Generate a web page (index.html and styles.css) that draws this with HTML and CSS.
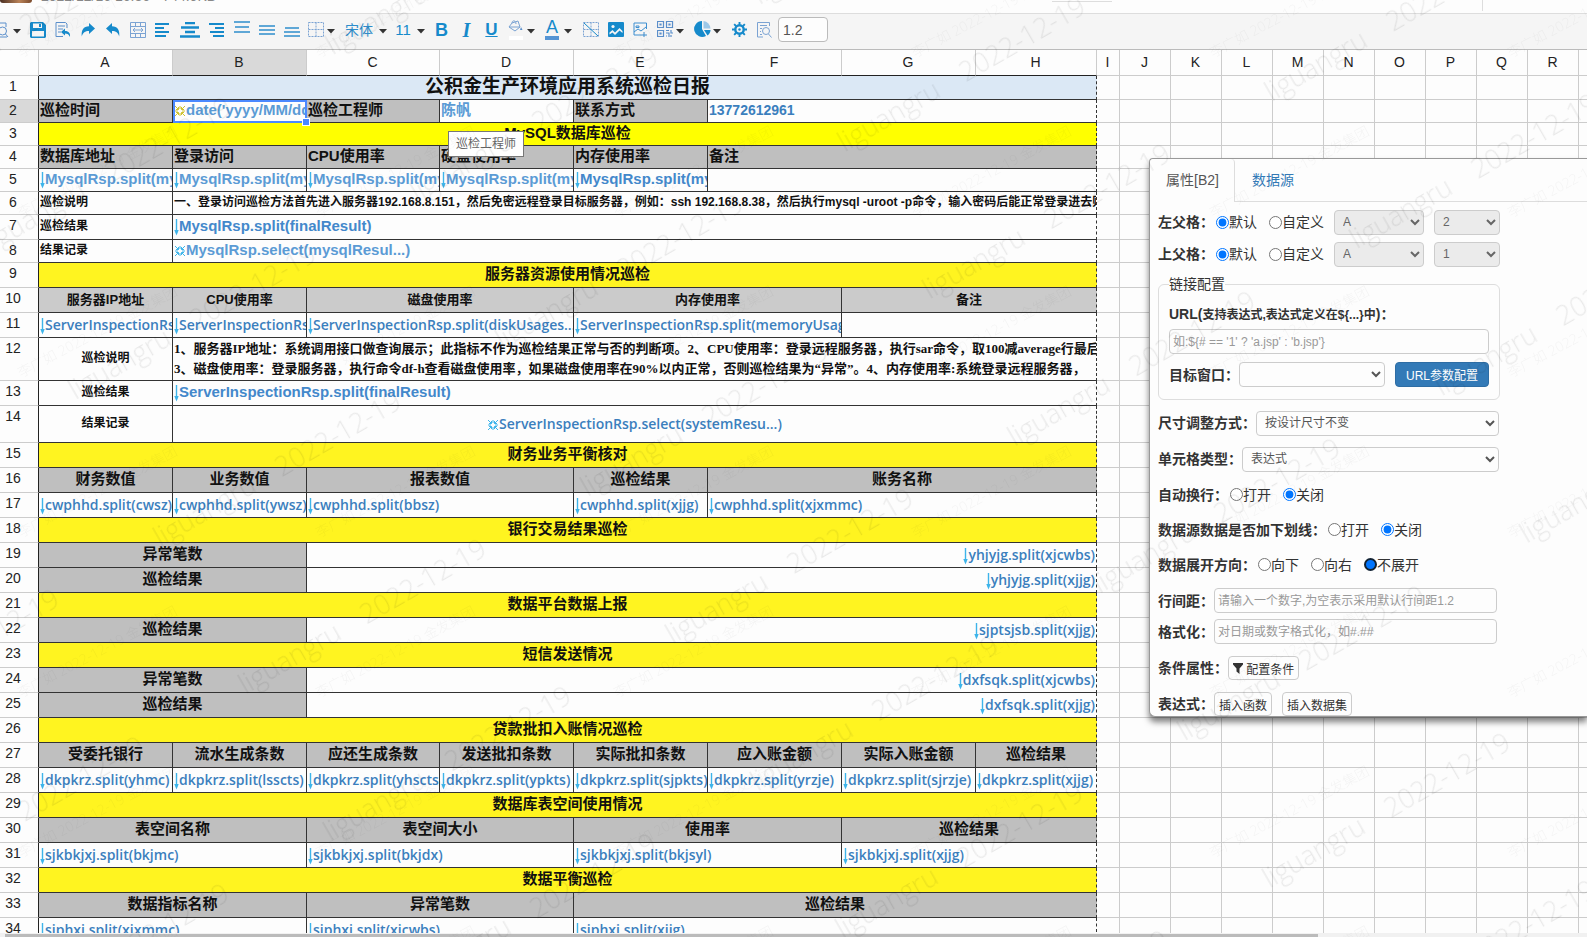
FILE: index.html
```html
<!DOCTYPE html>
<html lang="zh-CN">
<head>
<meta charset="utf-8">
<title>报表设计器</title>
<link rel="stylesheet" href="styles.css">
</head>
<body>
<svg class="defs" width="0" height="0" aria-hidden="true">
  <symbol id="down" viewBox="0 0 5 18"><path d="M2.5 1V15" stroke="#3db4ea" stroke-width="1.4" fill="none"/><path d="M0.3 12L2.5 17.500L4.700 12z" fill="#3db4ea"/></symbol>
  <symbol id="burst" viewBox="0 0 10 10"><path d="M0 0L3.500 3.500M10 0L6.500 3.500M0 10L3.500 6.500M10 10L6.500 6.500M5 0V3M5 7V10M0 5H3M7 5H10M3.500 1V3.500H1M6.500 1V3.500H9M3.500 9V6.500H1M6.500 9V6.500H9" stroke="currentColor" fill="none"/></symbol>
  <symbol id="caret" viewBox="0 0 8 5"><path d="M0 0H8L4 4.500z" fill="#333"/></symbol>
</svg>

<header class="titlebar">
  <span class="avatar"></span>
  <span class="file-meta">2022/12/16 16:36 · 744.9KB</span>
  <span class="title-chip"></span>
  <span class="title-sep"></span>
</header>

<div class="toolbar">
  <button class="tool first" aria-label="预览"><svg width="9" height="18" viewBox="0 0 9 18"><g fill="none" stroke="#5b8fcb"><path d="M0 2H6V6M0 16H7" /><circle cx="2.500" cy="10" r="4"/><path d="M5.500 13L8 16"/></g></svg><svg class="caret" width="8" height="5"><use href="#caret"/></svg></button>
  <button class="tool" aria-label="保存"><svg width="16" height="16" viewBox="0 0 16 16"><path fill="#168acb" fill-rule="evenodd" d="M1 0H13L16 3V15L15 16H1L0 15V1zM3 1.500V6H12V1.500zM2 9V14.500H14V9zM9 2H11V5H9z"/></svg></button>
  <button class="tool" aria-label="另存为"><svg width="16" height="16" viewBox="0 0 16 16"><path d="M12 6V2L10.500 .5H1V14.500H8M3 4H10M3 7H8M3 10H6" fill="none" stroke="#5b8fcb"/><path d="M6 10L10 6.500V9C14 9 15.500 11.500 15 15C14 12.500 12.500 11.500 10 11.500V13.500z" fill="#168acb"/></svg></button>
  <button class="tool" aria-label="重做"><svg width="14" height="14" viewBox="0 0 14 14"><path fill="#168acb" d="M14 5.500L8 0V3.200C2.500 3.200 0 7 .8 13.500C2 9.500 4 8 8 8V11z"/></svg></button>
  <button class="tool" aria-label="撤销"><svg width="14" height="14" viewBox="0 0 14 14"><path fill="#168acb" d="M0 5.500L6 0V3.200C11.500 3.200 14 7 13.200 13.500C12 9.500 10 8 6 8V11z"/></svg></button>
  <button class="tool" aria-label="合并单元格"><svg width="16" height="16" viewBox="0 0 16 16"><path d="M.5 .5H15.500V15.500H.5zM.5 4.500H15.500M.5 11.500H15.500M5.500 .5V4.500M10.500 .5V4.500M5.500 11.500V15.500M10.500 11.500V15.500M3 8H13M5 6L3 8L5 10M11 6L13 8L11 10" fill="none" stroke="#7ba3d3"/></svg></button>
  <button class="tool" aria-label="左对齐"><svg width="15" height="14" viewBox="0 0 15 14"><path d="M0 1H14M0 5H9M0 9H14M0 13H11" stroke="#168acb" stroke-width="2"/></svg></button>
  <button class="tool wide" aria-label="水平居中"><svg width="20" height="16" viewBox="0 0 20 16"><path d="M5 1H15M1 5.500H19M5 10H15M0 14.500H20" stroke="#168acb" stroke-width="2.400"/></svg></button>
  <button class="tool" aria-label="右对齐"><svg width="15" height="14" viewBox="0 0 15 14"><path d="M0 1H15M6 5H15M1 9H15M4 13H15" stroke="#168acb" stroke-width="2"/></svg></button>
  <button class="tool up" aria-label="顶端对齐"><svg width="16" height="12" viewBox="0 0 16 12"><path d="M0 1H16M1 6H15M0 11H16" stroke="#2e8dcc" stroke-width="1.500"/></svg></button>
  <button class="tool" aria-label="垂直居中"><svg width="16" height="10" viewBox="0 0 16 10"><path d="M0 1H16M0 5H16M0 9H16" stroke="#2e8dcc" stroke-width="1.600"/></svg></button>
  <button class="tool low" aria-label="底端对齐"><svg width="16" height="10" viewBox="0 0 16 10"><path d="M1 1H15M0 5H16M0 9H16" stroke="#2e8dcc" stroke-width="1.500"/></svg></button>
  <button class="tool drop" aria-label="边框"><svg width="16" height="15" viewBox="0 0 16 15"><path d="M.5 .5H15.500V14.500H.5zM8 .5V14.500M.5 7.500H15.500" fill="none" stroke="#7ba3d3" stroke-dasharray="2 1"/></svg><svg class="caret" width="8" height="5"><use href="#caret"/></svg></button>
  <button class="tool font-name">宋体<svg class="caret" width="8" height="5"><use href="#caret"/></svg></button>
  <button class="tool font-size">11<svg class="caret" width="8" height="5"><use href="#caret"/></svg></button>
  <button class="tool bold">B</button>
  <button class="tool italic">I</button>
  <button class="tool underline">U</button>
  <button class="tool drop" aria-label="背景色"><svg width="16" height="20" viewBox="0 0 16 20"><path d="M4 3L10 1L12 7L7 11L1 7z M1 7H12M4 3C4 0 8 0 8 4" fill="none" stroke="#7ba3d3"/><path d="M13 7L14.500 10H12z" fill="#5b8fcb"/><path d="M1 18H15" stroke="#fff" stroke-width="4"/></svg><svg class="caret" width="8" height="5"><use href="#caret"/></svg></button>
  <button class="tool drop" aria-label="字体颜色"><span class="fore">A</span><svg class="caret" width="8" height="5"><use href="#caret"/></svg></button>
  <button class="tool" aria-label="斜表头"><svg width="16" height="15" viewBox="0 0 16 15"><path d="M.5 .5H15.500V14.500H.5zM8 .5V14.500M.5 7.500H15.500" fill="none" stroke="#7ba3d3" stroke-dasharray="2 1"/><path d="M1 1L15 14" stroke="#168acb"/></svg></button>
  <button class="tool" aria-label="图片"><svg width="16" height="15" viewBox="0 0 16 15"><rect width="16" height="15" rx="1" fill="#168acb"/><circle cx="5" cy="4.500" r="1.600" fill="#f5f5f5"/><path fill="#f5f5f5" d="M1.500 10.500L4.500 8L7 10.500L11.500 6L14.500 9V11L11.500 8.500L7 13L4.500 10.500L1.500 12.500z"/></svg></button>
  <button class="tool" aria-label="图片表达式"><svg width="15" height="15" viewBox="0 0 15 15"><path d="M13.500 7V1H1V13H8M1 10L5 7L8 9L13 5M3 4H6V5.500H3zM8 13H14M11 10V15" fill="none" stroke="#3e8fd0"/></svg></button>
  <button class="tool drop" aria-label="二维码"><svg width="17" height="17" viewBox="0 0 17 17"><path d="M.5 .5H6.500V6.500H.5zM9.500 .5H15.500V6.500H9.500zM.5 9.500H6.500V15.500H.5zM3 3H4V4H3zM12 3H13V4H12zM3 12H4V13H3zM9 9.500H12M14 9V12H16M9 12H12V16M9 15H10M14 14V16" fill="none" stroke="#5b8fcb" stroke-width="1.200"/></svg><svg class="caret" width="8" height="5"><use href="#caret"/></svg></button>
  <button class="tool drop" aria-label="图表"><svg width="17" height="17" viewBox="0 0 17 17"><path fill="#168acb" d="M8 0A8 8 0 1 0 12 15L8 8z"/><path fill="#9cc8e8" d="M9.500 0A8 8 0 0 1 16.500 7.500H9.500z"/><path fill="#168acb" d="M10 9H16.500C16.500 11.500 15 13.500 13.500 14.500z"/></svg><svg class="caret" width="8" height="5"><use href="#caret"/></svg></button>
  <button class="tool" aria-label="设置"><svg width="15" height="15" viewBox="0 0 16 16"><circle cx="8" cy="8" r="4.500" fill="none" stroke="#168acb" stroke-width="2.600"/><circle cx="8" cy="8" r="1.300" fill="#168acb"/><path d="M8 0V3M8 13V16M0 8H3M13 8H16M2.300 2.300L4.500 4.500M11.500 11.500L13.700 13.700M2.300 13.700L4.500 11.500M11.500 4.500L13.700 2.300" stroke="#168acb" stroke-width="2"/></svg></button>
  <button class="tool" aria-label="查看"><svg width="15" height="16" viewBox="0 0 15 16"><g fill="none" stroke="#7ba3d3"><path d="M12.500 4V.5H.5V15H6M3 3.500H10M3 6.500H5M3 9.500H4M3 12.500H5"/><circle cx="9" cy="9" r="3.500"/><path d="M11.500 12L14.500 15.500"/></g></svg></button>
  <input class="line-height" value="1.2" aria-label="行高">
</div>

<main class="workspace">
<div class="sheet">
<table class="grid">
<colgroup><col class="c-num"><col class="c-a"><col class="c-a"><col class="c-c"><col class="c-a"><col class="c-a"><col class="c-a"><col class="c-a"><col class="c-h"><col class="c-i"><col class="c-j"><col class="c-j"><col class="c-j"><col class="c-j"><col class="c-j"><col class="c-j"><col class="c-j"><col class="c-j"><col class="c-j"><col class="c-j"></colgroup>
<thead><tr><th class="corner"></th><th>A</th><th class="on">B</th><th>C</th><th>D</th><th>E</th><th>F</th><th>G</th><th>H</th><th>I</th><th>J</th><th>K</th><th>L</th><th>M</th><th>N</th><th>O</th><th>P</th><th>Q</th><th>R</th><th></th></tr></thead>
<tbody>
<tr class="h24"><th>1</th><td class="title" colspan="8">公积金生产环境应用系统巡检日报</td><td class="free"></td><td class="empty" colspan="10"></td></tr>
<tr class="h23"><th class="on">2</th><td class="head">巡检时间</td><td class="exp arial soft selected"><div class="clip"><svg class="burst olive" width="10" height="10"><use href="#burst"/></svg>date('yyyy/MM/dd')</div><i class="handle"></i></td><td class="head">巡检工程师</td><td class="exp arial soft">陈帆</td><td class="head">联系方式</td><td class="exp phone" colspan="3">13772612961</td><td class="free"></td><td class="empty" colspan="10"></td></tr>
<tr class="h23"><th>3</th><td class="band pure" colspan="8">MySQL数据库巡检</td><td class="free"></td><td class="empty" colspan="10"></td></tr>
<tr class="h23"><th>4</th><td class="head">数据库地址</td><td class="head">登录访问</td><td class="head">CPU使用率</td><td class="head">硬盘使用率</td><td class="head">内存使用率</td><td class="head" colspan="3">备注</td><td class="free"></td><td class="empty" colspan="10"></td></tr>
<tr class="h23"><th>5</th><td class="exp arial soft"><svg class="down" width="5" height="18"><use href="#down"/></svg>MysqlRsp.split(my</td><td class="exp arial soft"><svg class="down" width="5" height="18"><use href="#down"/></svg>MysqlRsp.split(my</td><td class="exp arial soft"><svg class="down" width="5" height="18"><use href="#down"/></svg>MysqlRsp.split(my</td><td class="exp arial soft"><svg class="down" width="5" height="18"><use href="#down"/></svg>MysqlRsp.split(my</td><td class="exp arial"><svg class="down" width="5" height="18"><use href="#down"/></svg>MysqlRsp.split(my</td><td colspan="3"></td><td class="free"></td><td class="empty" colspan="10"></td></tr>
<tr class="h23"><th>6</th><td class="note">巡检说明</td><td class="note" colspan="7">一、登录访问巡检方法首先进入服务器192.168.8.151，然后免密远程登录目标服务器，例如：ssh 192.168.8.38，然后执行mysql -uroot -p命令，输入密码后能正常登录进去则</td><td class="free"></td><td class="empty" colspan="10"></td></tr>
<tr class="h25"><th>7</th><td class="note">巡检结果</td><td class="exp arial" colspan="7"><svg class="down" width="5" height="18"><use href="#down"/></svg>MysqlRsp.split(finalResult)</td><td class="free"></td><td class="empty" colspan="10"></td></tr>
<tr class="h23"><th>8</th><td class="note">结果记录</td><td class="exp arial soft" colspan="7"><svg class="burst" width="10" height="10"><use href="#burst"/></svg>MysqlRsp.select(mysqlResul...)</td><td class="free"></td><td class="empty" colspan="10"></td></tr>
<tr class="h25"><th>9</th><td class="band" colspan="8">服务器资源使用情况巡检</td><td class="free"></td><td class="empty" colspan="10"></td></tr>
<tr class="h25"><th>10</th><td class="sub">服务器IP地址</td><td class="sub">CPU使用率</td><td class="sub" colspan="2">磁盘使用率</td><td class="sub" colspan="2">内存使用率</td><td class="sub" colspan="2">备注</td><td class="free"></td><td class="empty" colspan="10"></td></tr>
<tr class="h25"><th>11</th><td class="exp"><svg class="down" width="5" height="18"><use href="#down"/></svg>ServerInspectionRs</td><td class="exp"><svg class="down" width="5" height="18"><use href="#down"/></svg>ServerInspectionRs</td><td class="exp" colspan="2"><svg class="down" width="5" height="18"><use href="#down"/></svg>ServerInspectionRsp.split(diskUsages...</td><td class="exp" colspan="2"><svg class="down" width="5" height="18"><use href="#down"/></svg>ServerInspectionRsp.split(memoryUsag</td><td colspan="2"></td><td class="free"></td><td class="empty" colspan="10"></td></tr>
<tr class="h43"><th>12</th><td class="note mid">巡检说明</td><td class="song" colspan="7">1、服务器IP地址：系统调用接口做查询展示；此指标不作为巡检结果正常与否的判断项。2、CPU使用率：登录远程服务器，执行sar命令，取100减average行最后<br>3、磁盘使用率：登录服务器，执行命令df-h查看磁盘使用率，如果磁盘使用率在90%以内正常，否则巡检结果为“异常”。4、内存使用率:系统登录远程服务器，</td><td class="free"></td><td class="empty" colspan="10"></td></tr>
<tr class="h25"><th>13</th><td class="note mid">巡检结果</td><td class="exp arial" colspan="7"><svg class="down" width="5" height="18"><use href="#down"/></svg>ServerInspectionRsp.split(finalResult)</td><td class="free"></td><td class="empty" colspan="10"></td></tr>
<tr class="h37"><th>14</th><td class="note mid">结果记录</td><td class="exp mid" colspan="7"><svg class="burst" width="10" height="10"><use href="#burst"/></svg>ServerInspectionRsp.select(systemResu...)</td><td class="free"></td><td class="empty" colspan="10"></td></tr>
<tr class="h25"><th>15</th><td class="band" colspan="8">财务业务平衡核对</td><td class="free"></td><td class="empty" colspan="10"></td></tr>
<tr class="h25"><th>16</th><td class="head mid">财务数值</td><td class="head mid">业务数值</td><td class="head mid" colspan="2">报表数值</td><td class="head mid">巡检结果</td><td class="head mid" colspan="3">账务名称</td><td class="free"></td><td class="empty" colspan="10"></td></tr>
<tr class="h25"><th>17</th><td class="exp"><svg class="down" width="5" height="18"><use href="#down"/></svg>cwphhd.split(cwsz)</td><td class="exp"><svg class="down" width="5" height="18"><use href="#down"/></svg>cwphhd.split(ywsz)</td><td class="exp" colspan="2"><svg class="down" width="5" height="18"><use href="#down"/></svg>cwphhd.split(bbsz)</td><td class="exp"><svg class="down" width="5" height="18"><use href="#down"/></svg>cwphhd.split(xjjg)</td><td class="exp" colspan="3"><svg class="down" width="5" height="18"><use href="#down"/></svg>cwphhd.split(xjxmmc)</td><td class="free"></td><td class="empty" colspan="10"></td></tr>
<tr class="h25"><th>18</th><td class="band" colspan="8">银行交易结果巡检</td><td class="free"></td><td class="empty" colspan="10"></td></tr>
<tr class="h25"><th>19</th><td class="head mid" colspan="2">异常笔数</td><td class="exp end" colspan="6"><svg class="down" width="5" height="18"><use href="#down"/></svg>yhjyjg.split(xjcwbs)</td><td class="free"></td><td class="empty" colspan="10"></td></tr>
<tr class="h25"><th>20</th><td class="head mid" colspan="2">巡检结果</td><td class="exp end" colspan="6"><svg class="down" width="5" height="18"><use href="#down"/></svg>yhjyjg.split(xjjg)</td><td class="free"></td><td class="empty" colspan="10"></td></tr>
<tr class="h25"><th>21</th><td class="band" colspan="8">数据平台数据上报</td><td class="free"></td><td class="empty" colspan="10"></td></tr>
<tr class="h25"><th>22</th><td class="head mid" colspan="2">巡检结果</td><td class="exp end" colspan="6"><svg class="down" width="5" height="18"><use href="#down"/></svg>sjptsjsb.split(xjjg)</td><td class="free"></td><td class="empty" colspan="10"></td></tr>
<tr class="h25"><th>23</th><td class="band" colspan="8">短信发送情况</td><td class="free"></td><td class="empty" colspan="10"></td></tr>
<tr class="h25"><th>24</th><td class="head mid" colspan="2">异常笔数</td><td class="exp end" colspan="6"><svg class="down" width="5" height="18"><use href="#down"/></svg>dxfsqk.split(xjcwbs)</td><td class="free"></td><td class="empty" colspan="10"></td></tr>
<tr class="h25"><th>25</th><td class="head mid" colspan="2">巡检结果</td><td class="exp end" colspan="6"><svg class="down" width="5" height="18"><use href="#down"/></svg>dxfsqk.split(xjjg)</td><td class="free"></td><td class="empty" colspan="10"></td></tr>
<tr class="h25"><th>26</th><td class="band" colspan="8">贷款批扣入账情况巡检</td><td class="free"></td><td class="empty" colspan="10"></td></tr>
<tr class="h25"><th>27</th><td class="head mid">受委托银行</td><td class="head mid">流水生成条数</td><td class="head mid">应还生成条数</td><td class="head mid">发送批扣条数</td><td class="head mid">实际批扣条数</td><td class="head mid">应入账金额</td><td class="head mid">实际入账金额</td><td class="head mid">巡检结果</td><td class="free"></td><td class="empty" colspan="10"></td></tr>
<tr class="h25"><th>28</th><td class="exp"><svg class="down" width="5" height="18"><use href="#down"/></svg>dkpkrz.split(yhmc)</td><td class="exp"><svg class="down" width="5" height="18"><use href="#down"/></svg>dkpkrz.split(lsscts)</td><td class="exp"><svg class="down" width="5" height="18"><use href="#down"/></svg>dkpkrz.split(yhscts</td><td class="exp"><svg class="down" width="5" height="18"><use href="#down"/></svg>dkpkrz.split(ypkts)</td><td class="exp"><svg class="down" width="5" height="18"><use href="#down"/></svg>dkpkrz.split(sjpkts)</td><td class="exp"><svg class="down" width="5" height="18"><use href="#down"/></svg>dkpkrz.split(yrzje)</td><td class="exp"><svg class="down" width="5" height="18"><use href="#down"/></svg>dkpkrz.split(sjrzje)</td><td class="exp"><svg class="down" width="5" height="18"><use href="#down"/></svg>dkpkrz.split(xjjg)</td><td class="free"></td><td class="empty" colspan="10"></td></tr>
<tr class="h25"><th>29</th><td class="band" colspan="8">数据库表空间使用情况</td><td class="free"></td><td class="empty" colspan="10"></td></tr>
<tr class="h25"><th>30</th><td class="head mid" colspan="2">表空间名称</td><td class="head mid" colspan="2">表空间大小</td><td class="head mid" colspan="2">使用率</td><td class="head mid" colspan="2">巡检结果</td><td class="free"></td><td class="empty" colspan="10"></td></tr>
<tr class="h25"><th>31</th><td class="exp" colspan="2"><svg class="down" width="5" height="18"><use href="#down"/></svg>sjkbkjxj.split(bkjmc)</td><td class="exp" colspan="2"><svg class="down" width="5" height="18"><use href="#down"/></svg>sjkbkjxj.split(bkjdx)</td><td class="exp" colspan="2"><svg class="down" width="5" height="18"><use href="#down"/></svg>sjkbkjxj.split(bkjsyl)</td><td class="exp" colspan="2"><svg class="down" width="5" height="18"><use href="#down"/></svg>sjkbkjxj.split(xjjg)</td><td class="free"></td><td class="empty" colspan="10"></td></tr>
<tr class="h25"><th>32</th><td class="band" colspan="8">数据平衡巡检</td><td class="free"></td><td class="empty" colspan="10"></td></tr>
<tr class="h25"><th>33</th><td class="head mid" colspan="2">数据指标名称</td><td class="head mid" colspan="2">异常笔数</td><td class="head mid" colspan="4">巡检结果</td><td class="free"></td><td class="empty" colspan="10"></td></tr>
<tr class="h25"><th>34</th><td class="exp" colspan="2"><svg class="down" width="5" height="18"><use href="#down"/></svg>sjphxj.split(xjxmmc)</td><td class="exp" colspan="2"><svg class="down" width="5" height="18"><use href="#down"/></svg>sjphxj.split(xjcwbs)</td><td class="exp" colspan="4"><svg class="down" width="5" height="18"><use href="#down"/></svg>sjphxj.split(xjjg)</td><td class="free"></td><td class="empty" colspan="10"></td></tr>
</tbody>
</table>
<div class="tooltip" role="tooltip">巡检工程师</div>
</div>

<aside class="panel">
  <nav class="tabs"><a class="tab active" href="#prop">属性[B2]</a><a class="tab" href="#data">数据源</a></nav>
  <form class="form">
    <div class="line parent"><span class="name">左父格：</span>
      <label class="opt"><input type="radio" name="left" checked>默认</label><label class="opt">
      <input type="radio" name="left">自定义</label>
      <select class="sel col" disabled aria-label="左父格列"><option>A</option></select><select class="sel row" disabled aria-label="左父格行"><option>2</option></select></div>
    <div class="line parent"><span class="name">上父格：</span>
      <label class="opt"><input type="radio" name="top" checked>默认</label><label class="opt">
      <input type="radio" name="top">自定义</label>
      <select class="sel col" disabled aria-label="上父格列"><option>A</option></select><select class="sel row" disabled aria-label="上父格行"><option>1</option></select></div>
    <fieldset class="link">
      <legend>链接配置</legend>
      <label class="name url" for="url">URL(<small>支持表达式,表达式定义在${...}中</small>)：</label>
      <input class="text" id="url" placeholder="如:${# == '1' ? 'a.jsp' : 'b.jsp'}">
      <div class="target"><label class="name" for="target">目标窗口：</label><select class="sel" id="target"><option></option></select><button class="primary" type="button">URL参数配置</button></div>
    </fieldset>
    <div class="line tall"><label class="name" for="size">尺寸调整方式：</label><select class="sel fill" id="size"><option>按设计尺寸不变</option></select></div>
    <div class="line tall"><label class="name" for="type">单元格类型：</label><select class="sel fill" id="type"><option>表达式</option></select></div>
    <div class="line radios"><span class="name">自动换行：</span><label class="opt"><input type="radio" name="wrap">打开</label><label class="opt"><input type="radio" name="wrap" checked>关闭</label></div>
    <div class="line radios"><span class="name">数据源数据是否加下划线：</span><label class="opt"><input type="radio" name="ul">打开</label><label class="opt"><input type="radio" name="ul" checked>关闭</label></div>
    <div class="line radios"><span class="name">数据展开方向：</span><label class="opt"><input type="radio" name="dir">向下</label><label class="opt"><input type="radio" name="dir">向右</label><label class="opt"><input class="focused" type="radio" name="dir" checked>不展开</label></div>
    <div class="line inputs"><label class="name" for="gap">行间距：</label><input class="text" id="gap" placeholder="请输入一个数字,为空表示采用默认行间距1.2"></div>
    <div class="line inputs"><label class="name" for="fmt">格式化：</label><input class="text" id="fmt" placeholder="对日期或数字格式化，如#.##"></div>
    <div class="line tall buttons"><span class="name">条件属性：</span><button class="plain" type="button"><svg width="10" height="11" viewBox="0 0 10 11"><path fill="#333" d="M0 0H10V1.500L6.500 5.500V11L3.500 8.500V5.500L0 1.500z"/></svg> 配置条件</button></div>
    <div class="line tall buttons"><span class="name">表达式：</span><button class="plain" type="button">插入函数</button><button class="plain" type="button">插入数据集</button></div>
  </form>
</aside>
</main>
<div class="scrollbar"><div class="thumb"></div></div>

<svg class="watermark" width="100%" height="100%" aria-hidden="true">
  <defs>
    <pattern id="wm-large" width="395" height="170" patternUnits="userSpaceOnUse" patternTransform="translate(871 218) rotate(-30)"><text x="10" y="100" font-size="27">liguangru</text><text x="150" y="100" font-size="27">2022-12-19</text></pattern>
    <pattern id="wm-small" x="893" y="420" width="298" height="160" patternUnits="userSpaceOnUse"><text transform="translate(22 118) rotate(-28)" font-size="14">李广如 2022-12-19 金发集团</text></pattern>
  </defs>
  <rect class="strong" width="100%" height="100%" fill="url(#wm-large)"/>
  <rect class="faint" width="100%" height="100%" fill="url(#wm-small)"/>
</svg>
</body>
</html>
```
FILE: styles.css
```css
* { box-sizing: border-box; }

body {
  margin: 0;
  height: 100vh;
  display: flex;
  flex-direction: column;
  overflow: hidden;
  background: #fdfdfd;
  color: #333;
  font: 14px/20px "Liberation Sans", "Noto Sans CJK SC", sans-serif;
}

.defs { position: absolute; }

/* title bar */
.titlebar {
  display: flex;
  align-items: flex-start;
  height: 14px;
  overflow: hidden;
  border-bottom: 1px solid #ddd;
}
.avatar { width: 32px; height: 3px; border-radius: 0 0 4px 4px; background: linear-gradient(90deg, #4a2f22, #b98258 60%, #7a4a2c); }
.file-meta { margin: -12px auto 0 9px; font-size: 14px; line-height: 16px; color: #888; }
.title-chip { width: 60px; height: 2px; margin-right: 370px; border-bottom: 1px solid #ddd; }
.title-sep { width: 1px; height: 11px; margin-right: 104px; background: #ddd; }

/* toolbar */
.toolbar {
  display: flex;
  align-items: center;
  height: 36px;
  flex: none;
  padding-bottom: 4px;
  background: #f5f5f5;
  border-bottom: 1px solid #bbb;
}
.tool {
  display: flex;
  align-items: center;
  justify-content: center;
  flex: none;
  width: 25px;
  height: 28px;
  padding: 0;
  border: 0;
  background: none;
  color: #168acb;
  font: 14px/20px "Liberation Sans", "Noto Sans CJK SC", sans-serif;
}
.tool.wide { width: 29px; }
.tool.up { padding-bottom: 5px; }
.tool.low { padding-top: 5px; }
.tool.drop { width: 37px; padding-left: 4px; justify-content: space-between; padding-right: 6px; }
.tool.first { justify-content: flex-start; gap: 4px; }
.tool.font-name { width: 50px; gap: 6px; color: #2e8dcc; }
.tool.font-size { width: 38px; gap: 6px; font-size: 15px; }
.tool.bold { font-size: 18px; font-weight: bold; }
.tool.italic { font: italic bold 20px/20px "Liberation Serif", serif; }
.tool.underline { font-size: 17px; font-weight: bold; text-decoration: underline; }
.fore { width: 14px; font-size: 18px; line-height: 17px; border-bottom: 4px solid #5494d4; }
.caret { margin-top: 3px; flex: none; }
.line-height {
  width: 50px;
  height: 25px;
  margin-left: 1px;
  padding: 0 4px;
  border: 1px solid #bbb;
  border-radius: 4px;
  background: #fdfdfd;
  color: #555;
  font: 14px "Liberation Sans", sans-serif;
}

/* spreadsheet */
.workspace { position: relative; flex: 1; min-height: 0; display: flex; }
.sheet { position: relative; flex: 1; min-width: 0; overflow: hidden; }
.grid { table-layout: fixed; width: 1629px; border-collapse: separate; border-spacing: 0; }
.c-num { width: 39px; }
.c-a { width: 134px; }
.c-c { width: 133px; }
.c-h { width: 121px; }
.c-i { width: 23px; }
.c-j { width: 51px; }

.grid th {
  padding: 0 12px 0 0;
  border-right: 1px solid #222;
  border-bottom: 1px solid #ccc;
  color: #222;
  font-size: 14px;
  font-weight: normal;
  line-height: 20px;
  vertical-align: top;
}
.grid thead th {
  height: 26px;
  padding: 0 1px 2px 0;
  vertical-align: middle;
  border-color: #ccc;
}
.grid thead th:nth-child(-n+9) { border-bottom-color: #222; }
.grid thead th:first-child { border-bottom-color: #ccc; }
.grid th.on { background: #d9d9d9; }
.h23 { height: 23px; }
.h24 { height: 24px; }
.h25 { height: 25px; }
.h37 { height: 37px; }
.h43 { height: 43px; }

.grid td {
  padding: 0 1px 2px;
  overflow: hidden;
  white-space: nowrap;
  border-right: 1px solid #333;
  border-bottom: 1px solid #333;
  color: #111;
  font: bold 15px/20px "Liberation Sans", "Noto Sans CJK SC", sans-serif;
  vertical-align: middle;
}
.grid td:nth-last-child(3) { border-right: 1px dashed #333; }
.grid td.free, .grid td.empty { border-color: #ccc; }
.grid td.empty { background: repeating-linear-gradient(90deg, transparent 0 50px, #ccc 50px 51px); }
.grid td.title { background: #dbe8f5; font-size: 19px; text-align: center; }
.grid td.band { background: #fff420; font-size: 15px; text-align: center; }
.grid td.pure { background: #ff0; }
.grid td.head { background: #bfbfbf; }
.grid td.sub { padding-bottom: 0; background: #cbcbcb; font-size: 13px; text-align: center; }
.grid td.note { font-size: 12px; }
.grid td.song { padding-bottom: 0; font: bold 13px/20px "Liberation Serif", "Noto Sans CJK SC", serif; }
.grid td.exp { padding-bottom: 0; line-height: 20px; color: #3b7fbd; font-family: "Open Sans", "Noto Sans CJK SC", sans-serif; font-size: 14px; font-weight: 600; }
.grid td.arial { padding-bottom: 2px; color: #4388cb; font-family: "Liberation Sans", "Noto Sans CJK SC", sans-serif; font-size: 15px; font-weight: bold; }
.grid td.soft { color: #5b9bd5; }
.grid td.phone { padding-bottom: 2px; font-family: "Liberation Sans", sans-serif; font-size: 14px; font-weight: bold; }
.grid td.mid { text-align: center; }
.grid td.end { text-align: right; }
.down { vertical-align: middle; }
.burst { margin: 0 1px; color: #3db4ea; vertical-align: middle; }
.burst.olive { color: #cfc22e; }
.grid td.selected { position: relative; overflow: visible; outline: 2px solid #4b89ff; outline-offset: -2px; }
.clip { overflow: hidden; }
.handle { position: absolute; right: -4px; bottom: -4px; width: 8px; height: 8px; background: #4b89ff; border: 1px solid #fff; }
.tooltip {
  position: absolute;
  left: 448px;
  top: 81px;
  padding: 2px 7px;
  border: 1px solid #777;
  background: #fff;
  color: #666;
  font-size: 12px;
}

/* property panel */
.panel {
  position: absolute;
  top: 108px;
  right: 0;
  width: 438px;
  height: 559px;
  overflow: hidden;
  background: #fdfdfd;
  border: 1px solid #999;
  border-right: 0;
  border-radius: 4px 0 0 6px;
  box-shadow: 0 5px 6px rgba(0, 0, 0, .5);
}
.tabs { display: flex; height: 43px; border-bottom: 1px solid #ddd; }
.tab { height: 43px; padding: 11px 17px; color: #337ab7; text-decoration: none; }
.tab.active { padding: 11px 15px 11px 16px; border-right: 1px solid #ddd; border-radius: 4px 4px 0 0; background: #fdfdfd; color: #555; }
.form { width: 350px; padding: 4px 0 0 8px; }
.name { flex: none; font-weight: bold; }
.line { display: flex; align-items: center; }
.parent { height: 32px; }
.tall { height: 36px; }
.radios { height: 35px; }
.inputs { height: 31px; }
.opt { display: flex; align-items: center; flex: none; margin-right: 12px; }
.opt input { width: 13px; height: 13px; margin: 0; accent-color: #0075ff; }
.opt input.focused { appearance: none; border: 2px solid #123; border-radius: 50%; background: #0075ff; }
.parent .name, .radios .name { margin-right: 2px; }
.sel, .text {
  height: 25px;
  border: 1px solid #ccc;
  border-radius: 4px;
  background: #fdfdfd;
  color: #555;
  font: 12px "Liberation Sans", "Noto Sans CJK SC", sans-serif;
  padding: 0 4px;
}
.sel:disabled { background: #ebebeb; color: #666; opacity: 1; }
.sel.col { width: 90px; margin: 0 10px 0 -2px; }
.sel.row { width: 66px; }
.sel.fill { flex: 1; min-width: 0; }
.text::placeholder { color: #999; }
.text { padding: 0 3px; }
.link {
  margin: 4px 0 5px;
  width: 341px;
  padding: 10px 10px 12px;
  border: 1px solid #ddd;
  border-radius: 6px;
}
.link legend { padding: 0; }
.url { display: block; margin-bottom: 4px; }
.url small { font-size: 12px; }
.link .text { width: 320px; display: block; }
.target { display: flex; align-items: center; margin-top: 8px; }
.target .sel { flex: 1; min-width: 0; }
.primary { width: 94px; height: 25px; margin-left: 10px; padding: 0; border: 1px solid #2e6da4; border-radius: 4px; background: #337ab7; color: #fff; font: 12px "Liberation Sans", "Noto Sans CJK SC", sans-serif; }
.inputs .text { flex: 1; margin-right: 2px; }
.radios + .inputs, .inputs + .buttons { margin-top: 3px; }
.form .tall { width: 341px; }
.form .inputs { width: 341px; }
.plain { height: 24px; margin-right: 10px; padding: 0 4px; border: 1px solid #ccc; border-radius: 4px; background: #fdfdfd; color: #333; font: 12px "Liberation Sans", "Noto Sans CJK SC", sans-serif; }

/* bottom scrollbar */
.scrollbar { flex: none; height: 4px; padding: 1px 0 0 5px; background: #f1f1f1; }
.thumb { width: 83%; height: 3px; background: #bbb; }

/* page watermark */
.watermark { position: absolute; inset: 0; pointer-events: none; font-family: "Open Sans", "Noto Sans CJK SC", sans-serif; font-weight: 300; }
.strong { opacity: .08; }
.faint { opacity: .04; }
```
